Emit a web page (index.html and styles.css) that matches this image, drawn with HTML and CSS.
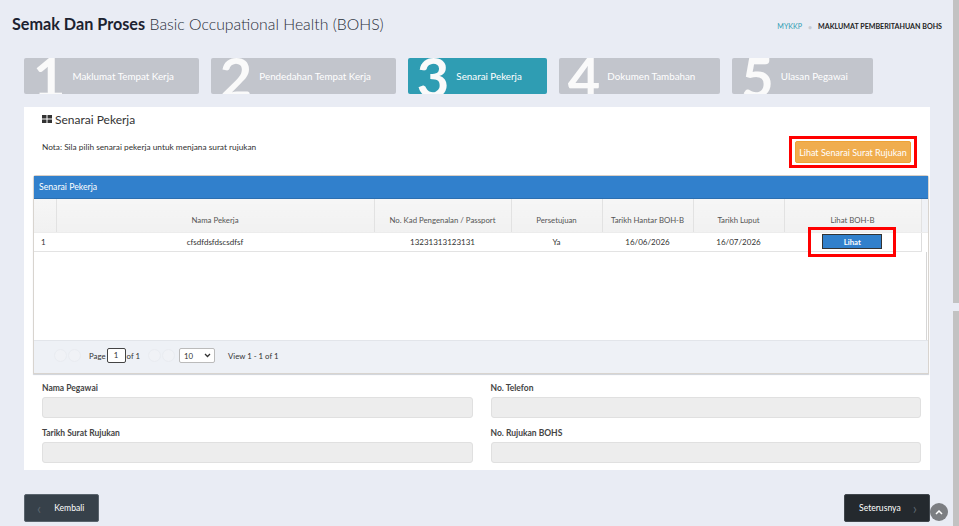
FILE: index.html
```html
<!DOCTYPE html>
<html>
<head>
<meta charset="utf-8">
<link rel="stylesheet" href="styles.css">
</head>
<body>
<div class="page">
  <div class="header">
    <h1 class="title"><b>Semak Dan Proses</b> <span class="light">Basic Occupational Health (BOHS)</span></h1>
    <div class="crumbs"><span class="crumb-link">MYKKP</span><span class="crumb-sep">•</span><span class="crumb-cur">MAKLUMAT PEMBERITAHUAN BOHS</span></div>
  </div>

  <div class="steps">
    <div class="step"><span class="num">1</span><span class="lbl">Maklumat Tempat Kerja</span></div>
    <div class="step"><span class="num">2</span><span class="lbl">Pendedahan Tempat Kerja</span></div>
    <div class="step active"><span class="num">3</span><span class="lbl">Senarai Pekerja</span></div>
    <div class="step"><span class="num">4</span><span class="lbl">Dokumen Tambahan</span></div>
    <div class="step"><span class="num">5</span><span class="lbl">Ulasan Pegawai</span></div>
  </div>

  <div class="panel">
    <div class="panel-title">
      <svg class="grid-ico" width="10" height="8" viewBox="0 0 10 8"><rect x="0" y="0" width="4.5" height="3.5" fill="#333"/><rect x="5.5" y="0" width="4.5" height="3.5" fill="#333"/><rect x="0" y="4.5" width="4.5" height="3.5" fill="#333"/><rect x="5.5" y="4.5" width="4.5" height="3.5" fill="#333"/></svg>
      <span>Senarai Pekerja</span>
    </div>
    <div class="nota-row">
      <p class="nota">Nota: Sila pilih senarai pekerja untuk menjana surat rujukan</p>
      <div class="hl-box"><button class="btn-orange">Lihat Senarai Surat Rujukan</button></div>
    </div>

    <div class="grid">
      <div class="grid-cap">Senarai Pekerja</div>
      <table class="gt">
        <colgroup>
          <col style="width:22px"><col style="width:318px"><col style="width:137px"><col style="width:91px"><col style="width:91px"><col style="width:91px"><col style="width:137px"><col>
        </colgroup>
        <thead>
          <tr><th></th><th>Nama Pekerja</th><th>No. Kad Pengenalan / Passport</th><th>Persetujuan</th><th>Tarikh Hantar BOH-B</th><th>Tarikh Luput</th><th>Lihat BOH-B</th><th class="sp"></th></tr>
        </thead>
        <tbody>
          <tr class="row"><td class="idx">1</td><td>cfsdfdsfdscsdfsf</td><td>13231313123131</td><td>Ya</td><td>16/06/2026</td><td>16/07/2026</td><td class="act"><button class="btn-lihat">Lihat</button><span class="hl-abs"></span></td><td class="sp2"></td></tr>
        </tbody>
      </table>
      <div class="grid-body"></div>
      <div class="pager">
        <span class="pbtn"></span><span class="pbtn"></span>
        <span class="ptxt">Page</span><span class="pinput">1</span><span class="ptxt">of 1</span>
        <span class="pbtn"></span><span class="pbtn"></span>
        <span class="psel">10<svg width="7" height="5" viewBox="0 0 7 5"><path d="M1 1l2.5 2.5L6 1" stroke="#333" stroke-width="1.3" fill="none"/></svg></span>
        <span class="ptxt view">View 1 - 1 of 1</span>
      </div>
    </div>

    <div class="form">
      <div class="field"><label>Nama Pegawai</label><div class="inp"></div></div>
      <div class="field"><label>No. Telefon</label><div class="inp"></div></div>
      <div class="field"><label>Tarikh Surat Rujukan</label><div class="inp"></div></div>
      <div class="field"><label>No. Rujukan BOHS</label><div class="inp"></div></div>
    </div>
  </div>

  <div class="footer">
    <button class="btn-dark back"><span class="chev">‹</span>Kembali</button>
    <button class="btn-dark next">Seterusnya<span class="chev">›</span></button>
  </div>
  <div class="totop"><svg width="8" height="5" viewBox="0 0 8 5"><path d="M1 4l3-3 3 3" stroke="#fff" stroke-width="1.5" fill="none"/></svg></div>
</div>
<div class="sbar"><div class="sb1"></div><div class="sb2"></div></div>
</body>
</html>
```

FILE: styles.css
```css
* { box-sizing: border-box; }
html, body { margin: 0; padding: 0; }
body {
  background: #e9ecf4;
  font-family: Lato, "Open Sans", sans-serif;
  color: #333;
  overflow: hidden;
}
.page { width: 953px; height: 526px; position: relative; }

.header {
  display: flex;
  justify-content: space-between;
  align-items: flex-start;
  padding: 12px 11px 0 12px;
  height: 58px;
}
.title {
  margin: 0;
  font-size: 16.2px;
  font-weight: 300;
  color: #2a2f3a;
  line-height: 23px;
}
.title b { font-weight: 700; color: #1c2230; }
.title .light { font-size: 15.8px; }
.crumbs {
  margin-top: 10px;
  font-size: 7.1px;
  font-weight: 700;
  display: flex;
  align-items: center;
  gap: 6px;
}
.crumb-link { color: #2f9db3; font-weight: 400; }
.crumb-sep { color: #c8ccd4; font-size: 7px; }
.crumb-cur { color: #222; }

.steps {
  display: flex;
  gap: 12px;
  padding-left: 24px;
  height: 36px;
}
.step {
  background: #c2c5cc;
  height: 36px;
  overflow: hidden;
  display: flex;
  align-items: flex-start;
  padding: 0 25px 0 9px;
  border-radius: 2px;
  color: #fff;
}
.step.active { background: #2f9db3; }
.num {
  font-size: 56px;
  font-weight: 700;
  line-height: 56px;
  margin-top: -9px;
  margin-right: 7px;
  color: #fafafa;
}
.lbl {
  font-size: 9.8px;
  line-height: 36px;
  white-space: nowrap;
}

.panel {
  background: #fff;
  margin: 13px 23px 0 24px;
  height: 363px;
  padding: 0 9px 0 9px;
}
.panel-title {
  display: flex;
  align-items: center;
  gap: 3px;
  padding: 3px 0 0 9px;
  font-size: 12px;
  height: 21px;
  color: #333;
}
.grid-ico { display: block; }
.nota-row {
  display: flex;
  justify-content: space-between;
  align-items: flex-start;
  padding: 8px 4px 0 9px;
  height: 47px;
}
.nota { margin: 6px 0 0; font-size: 8.3px; color: #333; }
.hl-box {
  border: 3px solid #f00;
  padding: 2px 3px;
}
.btn-orange {
  display: block;
  background: #f0ad4e;
  border: 1px solid #eea236;
  color: #fff;
  font-family: Lato, sans-serif;
  font-size: 9px;
  height: 22px;
  width: 116px;
  border-radius: 2px;
  padding: 0;
}

.grid {
  border: 1px solid #d8d4cf;
  border-top-color: #d9cfc6;
  border-radius: 3px 3px 0 0;
  margin-right: -8px;
  box-shadow: 0 1px 1px #cfd3da;
}
.grid-cap {
  background: #3180cc;
  color: #fff;
  font-size: 8.7px;
  height: 23px;
  line-height: 22px;
  padding-left: 5px;
  border-bottom: 1px solid #2c6fb0;
}
.gt {
  width: 100%;
  border-collapse: collapse;
  table-layout: fixed;
  font-size: 7.8px;
}
.gt th {
  background: linear-gradient(#f6f6f6, #f1f1f1);
  color: #555;
  font-weight: 400;
  height: 33px;
  vertical-align: bottom;
  padding: 0 0 7px;
  border-left: 1px solid #e2e2e2;
  border-bottom: 1px solid #ececec;
}
.gt th:first-child { border-left: none; }
.gt th.sp { background: #f0f2f6; }
.gt td {
  text-align: center;
  height: 19px;
  color: #333;
  font-size: 8px;
  border-bottom: 1px solid #e3e3e3;
  padding: 0;
}
.gt td.idx { text-align: left; padding-left: 7px; }
.gt td.sp2 { border-bottom: none; border-left: 1px solid #ddd; }
.act { position: relative; }
.btn-lihat {
  background: #3180cc;
  color: #fff;
  border: 1px solid #333;
  width: 60px;
  height: 15px;
  font-family: Lato, sans-serif;
  font-size: 7.8px;
  font-weight: 700;
  padding: 0;
  vertical-align: middle;
}
.hl-abs {
  position: absolute;
  left: 24px;
  top: -6px;
  width: 88px;
  height: 30px;
  border: 3px solid #f00;
}
.grid-body {
  height: 88px;
  border-right: 1px solid #d6d6d6;
  margin-right: 1px;
}
.pager {
  background: #eef1f6;
  border-top: 1px solid #e2e5ea;
  height: 33px;
  display: flex;
  align-items: center;
  padding: 0 0 2px 20px;
  font-size: 7.8px;
  color: #333;
}
.pbtn {
  width: 13px;
  height: 13px;
  border-radius: 50%;
  background: #f0f2f6;
  border: 1px solid #e9ecf1;
  margin-right: 1px;
}
.ptxt { margin: 0 1px 0 7px; }
.pinput {
  border: 1px solid #444;
  border-radius: 2px;
  width: 19px;
  height: 15px;
  line-height: 13px;
  text-align: center;
  background: #fff;
}
.pinput + .ptxt { margin: 0 8px 0 1px; }
.psel {
  display: flex;
  align-items: center;
  justify-content: space-between;
  width: 36px;
  height: 15px;
  border: 1px solid #bbb;
  border-radius: 2px;
  background: #fff;
  padding: 0 3px 0 4px;
  margin-left: 3px;
}
.ptxt.view { margin-left: 13px; }

.form {
  display: grid;
  grid-template-columns: 1fr 1fr;
  column-gap: 18px;
  padding: 7px 0 0 9px;
}
.field label {
  display: block;
  font-size: 8.5px;
  font-weight: 700;
  color: #444;
  height: 16px;
  line-height: 14px;
}
.inp {
  height: 21px;
  background: #ededed;
  border: 1px solid #e0e0e0;
  border-radius: 3px;
  margin-bottom: 8px;
}

.footer {
  display: flex;
  justify-content: space-between;
  margin: 24px 23px 0 24px;
}
.btn-dark {
  height: 28px;
  color: #fff;
  font-family: Lato, sans-serif;
  font-size: 8.6px;
  border: 1px solid #5a646d;
  border-radius: 2px;
  display: flex;
  align-items: center;
  padding: 0;
}
.btn-dark.back { width: 75px; background: #37414a; padding-left: 12px; }
.btn-dark.back .chev { margin-right: 13px; }
.btn-dark.next { width: 86px; background: #24292e; padding-left: 14px; border-color: #40464c; }
.btn-dark.next .chev { margin-left: 12px; }
.chev { color: #5c666f; font-size: 15px; line-height: 1; }
.totop {
  position: absolute;
  left: 930px;
  top: 503px;
  width: 18px;
  height: 18px;
  border-radius: 50%;
  background: #7c7e82;
  display: flex;
  align-items: center;
  justify-content: center;
}
.sbar {
  position: fixed;
  top: 0;
  right: 0;
  width: 6px;
  height: 526px;
}
.sb1 { height: 303px; background: #c2c2c2; }
.sb2 { margin-top: 8px; height: 215px; background: #c2c2c2; }
```
